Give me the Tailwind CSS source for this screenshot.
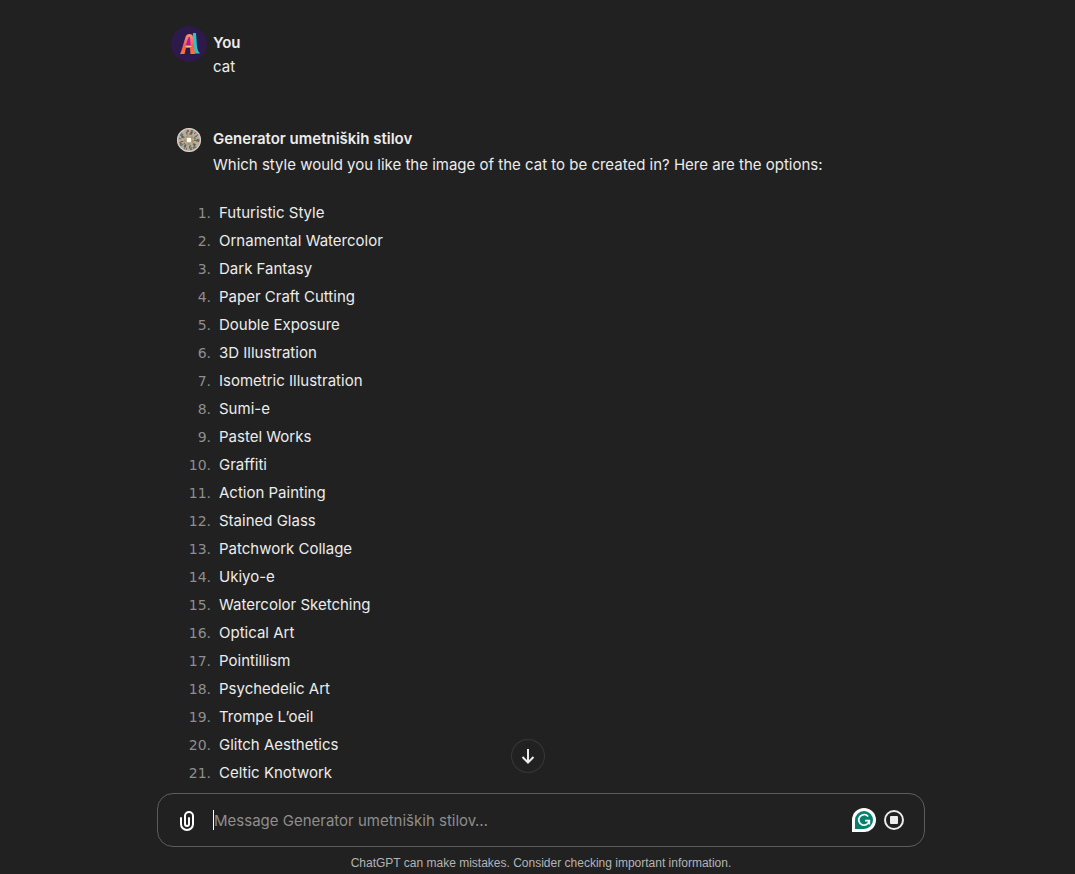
<!DOCTYPE html>
<html lang="en">

<head>
    <meta charset="UTF-8">
    <meta name="viewport" content="width=device-width, initial-scale=1.0">
    <title>Generator umetniških stilov</title>
    <script src="https://cdn.jsdelivr.net/npm/@tailwindcss/browser@4"></script>
</head>

<body class="bg-[#212121] text-[#ececec] font-['Inter','Liberation_Sans',sans-serif]">
    <div class="relative flex flex-col h-screen pl-[7px]">
        <!-- Conversation -->
        <main class="flex-1 min-h-0 overflow-hidden">
            <div class="w-full max-w-3xl mx-auto px-5 pt-[31px]">
                <article class="flex gap-3 text-[15px]">
                    <div class="w-6 shrink-0">
                        <svg class="size-9 max-w-none -ml-1.5 -mt-[5px]" viewBox="0 0 36 36" role="img" aria-label="You">
                            <defs>
                                <linearGradient id="warm" x1="0" y1="0" x2="0" y2="1">
                                    <stop offset="0" stop-color="#f7917c" />
                                    <stop offset="0.6" stop-color="#f4574f" />
                                    <stop offset="1" stop-color="#f97a2c" />
                                </linearGradient>
                            </defs>
                            <circle cx="18" cy="18" r="18" fill="#2d1a4a" />
                            <path d="M22 7h3l1 14q.5 4 3 6.500h-5l-3-8z" fill="#22c4cf" />
                            <path d="M18 10h2l.500 9h-5.500z" fill="#b5149c" />
                            <path fill-rule="evenodd" d="M9 28l1-2 4.500-15q1-3 4-3t3.500 3l2 17h-4.500l-.500-6h-4l-1.500 6zM17.500 11.500l-2.500 7.500h4.500l-.500-7.500q-.700-1-1.500 0z" fill="url(#warm)" />
                            <path d="M14.500 20.500h6" stroke="#fbc08a" />
                        </svg>
                    </div>
                    <div>
                        <h2 class="font-semibold leading-6">You</h2>
                        <p class="leading-6">cat</p>
                    </div>
                </article>

                <article class="flex gap-3 mt-12 text-[15px]">
                    <div class="w-6 shrink-0 pt-px">
                        <svg class="size-6" viewBox="0 0 24 24" fill="none" role="img" aria-label="Generator umetniških stilov">
                            <circle cx="12" cy="12" r="12" fill="#b5ada0" />
                            <circle cx="12" cy="12" r="9" stroke="#5f7a78" stroke-width="3" stroke-dasharray="2 5 1 3" />
                            <circle cx="12" cy="12" r="9" stroke="#a8503c" stroke-width="2" stroke-dasharray="1 7 2 6" />
                            <circle cx="12" cy="12" r="7" stroke="#6b604e" stroke-width="3" stroke-dasharray="1 3 2 4" />
                            <circle cx="12" cy="12" r="6" stroke="#3f8286" stroke-width="2" stroke-dasharray="1 6" />
                            <circle cx="12" cy="12" r="4" stroke="#b3925c" stroke-width="2" stroke-dasharray="3 2" />
                            <rect x="10" y="10" width="4" height="4" fill="#fff8e6" />
                            <circle cx="12" cy="12" r="11.500" stroke="#dcd6cc" />
                        </svg>
                    </div>
                    <div>
                        <h2 class="font-semibold leading-6">Generator umetniških stilov</h2>
                        <p class="leading-7">Which style would you like the image of the cat to be created in? Here are the options:</p>
                        <ol id="styles" class="mt-5 -ml-8 leading-7"></ol>
                    </div>
                </article>
            </div>
        </main>

        <!-- Composer -->
        <footer class="relative w-full max-w-3xl mx-auto pt-1">
            <button type="button" aria-label="Scroll to bottom"
                class="absolute left-[354px] -top-[50px] size-[34px] flex items-center justify-center rounded-full border border-white/10 bg-[#212121]">
                <svg class="size-6" viewBox="0 0 24 24" fill="none" stroke="currentColor" stroke-width="2">
                    <path d="M12 5v13M6.500 13l5.500 5.500 5.500-5.500" />
                </svg>
            </button>
            <form class="flex items-center h-[54px] pl-[17px] pr-5 border border-[#5c5c5c] rounded-2xl">
                <button type="button" aria-label="Attach files" class="pt-0.5 text-white">
                    <svg class="size-6" viewBox="0 0 24 24" fill="currentColor">
                        <path fill-rule="evenodd" clip-rule="evenodd" d="M9 7a5 5 0 0 1 10 0v8a7 7 0 1 1-14 0V9a1 1 0 0 1 2 0v6a5 5 0 0 0 10 0V7a3 3 0 1 0-6 0v8a1 1 0 1 0 2 0V9a1 1 0 1 1 2 0v6a3 3 0 1 1-6 0z" />
                    </svg>
                </button>
                <span class="ml-[14px] w-px h-5 bg-white"></span>
                <input type="text" aria-label="Message" placeholder="Message Generator umetniških stilov…"
                    class="flex-1 min-w-0 pt-0.5 text-[15px] leading-6 outline-none placeholder:text-[#8e8e8e]">
                <button type="button" aria-label="Grammar check">
                    <svg class="size-6" viewBox="0 0 24 24" fill="none">
                        <path d="M12 0a12 12 0 1 1 0 24H0V12A12 12 0 0 1 12 0z" fill="#fff" />
                        <path d="M12 3a9 9 0 1 1 0 18H3v-9a9 9 0 0 1 9-9z" fill="#07816c" />
                        <path d="M16.200 8.500A5.300 5.300 0 1 0 17.300 12.700H13M17.300 12.700v3.800" stroke="#fff" stroke-width="1.700" />
                    </svg>
                </button>
                <button type="button" aria-label="Stop generating" class="ml-2">
                    <svg class="size-5" viewBox="0 0 20 20" fill="none">
                        <circle cx="10" cy="10" r="9" stroke="#ececec" stroke-width="2" />
                        <rect x="6" y="6" width="8" height="8" rx="1" fill="#ececec" />
                    </svg>
                </button>
            </form>
            <p class="pt-2 pb-[3px] text-center font-['Liberation_Sans',sans-serif] text-xs text-[#b4b4b4]">ChatGPT can make mistakes. Consider checking important information.</p>
        </footer>
    </div>

    <script>
        const styles = [
            'Futuristic Style', 'Ornamental Watercolor', 'Dark Fantasy', 'Paper Craft Cutting',
            'Double Exposure', '3D Illustration', 'Isometric Illustration', 'Sumi-e', 'Pastel Works',
            'Graffiti', 'Action Painting', 'Stained Glass', 'Patchwork Collage', 'Ukiyo-e',
            'Watercolor Sketching', 'Optical Art', 'Pointillism', 'Psychedelic Art', 'Trompe L’oeil',
            'Glitch Aesthetics', 'Celtic Knotwork'
        ];

        document.getElementById('styles').innerHTML = styles.map((name, i) => `
            <li class="flex gap-2">
                <span class="w-[30px] text-right text-sm leading-7 text-[#8e8e8e] font-['DejaVu_Sans',sans-serif]">${i + 1}.</span>
                <span>${name}</span>
            </li>`).join('');
    </script>
</body>

</html>
